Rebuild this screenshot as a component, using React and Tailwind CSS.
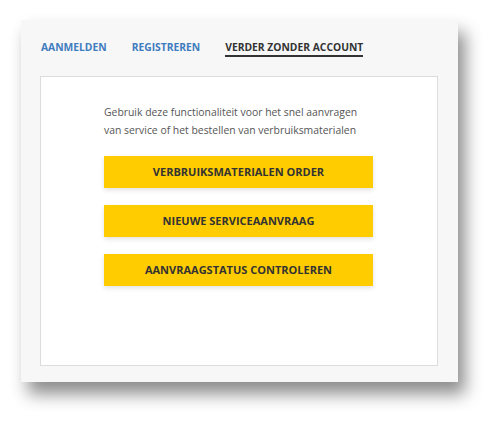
export default function App() {
  const buttons = [
    "VERBRUIKSMATERIALEN ORDER",
    "NIEUWE SERVICEAANVRAAG",
    "AANVRAAGSTATUS CONTROLEREN",
  ];

  return (
    <div
      className="w-[500px] h-[424px] bg-white pt-[20px] pl-[21px]"
      style={{ fontFamily: '"Open Sans", sans-serif' }}
    >
      <div className="w-[437px] h-[362px] bg-[#f7f7f7] shadow-[7px_12px_16px_rgba(0,0,0,0.45)] pt-[20px] px-[19px]">
        <div className="flex gap-[25px] text-[10.3px] font-bold h-[36px] pl-[1px]">
          <span className="text-[#3f7cbf] leading-[15px]">AANMELDEN</span>
          <span className="text-[#3f7cbf] leading-[15px]">REGISTREREN</span>
          <span className="text-[#333] leading-[15px] h-[17px] border-b-2 border-[#333]">
            VERDER ZONDER ACCOUNT
          </span>
        </div>
        <div className="w-[398px] h-[290px] bg-white border border-[#dcdcdc] pt-[26px] pl-[63px]">
          <p className="text-[10.4px] leading-[18px] text-[#555]">
            Gebruik deze functionaliteit voor het snel aanvragen
            <br />
            van service of het bestellen van verbruiksmaterialen
          </p>
          <div className="flex flex-col gap-[17px] mt-[17px]">
            {buttons.map((b) => (
              <button
                key={b}
                className="w-[269px] h-[32px] bg-[#ffcc00] text-[#333] text-[11px] font-bold shadow-[0_2px_5px_rgba(0,0,0,0.12)]"
              >
                {b}
              </button>
            ))}
          </div>
        </div>
      </div>
    </div>
  );
}
